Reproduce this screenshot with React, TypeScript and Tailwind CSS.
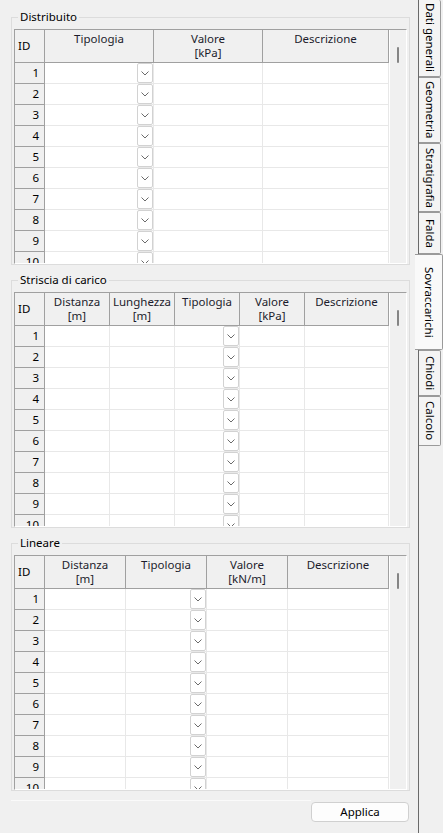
import React from 'react';

type Col = { lines: string[]; dropdown?: boolean };

const ROWS = [1, 2, 3, 4, 5, 6, 7, 8, 9, 10];

const Chevron = () => (
  <svg width="8" height="5" viewBox="0 0 8 5" fill="none">
    <path d="M0.5 0.5 L4 4 L7.5 0.5" stroke="#6b6b6b" strokeWidth="1" />
  </svg>
);

const DataTable = ({ cols, gridClass }: { cols: Col[]; gridClass: string }) => {
  return (
    <div className="flex border-t border-l border-[#a0a0a0] border-r-white border-b-white border-r border-b">
      <div className="flex flex-col">
        {/* Header */}
        <div className={`grid ${gridClass} h-[33px]`}>
          <div className="flex items-center pl-[3px] border-r border-b border-[#a0a0a0]">ID</div>
          {cols.map((c, i) => (
            <div
              key={i}
              className="flex flex-col items-center pt-[2px] leading-[14px] border-r border-b border-[#a0a0a0] text-[#1c1c2c]"
            >
              {c.lines.map((l) => (
                <span key={l}>{l}</span>
              ))}
            </div>
          ))}
        </div>
        {/* Body */}
        <div className="h-[200px] overflow-hidden">
          {ROWS.map((r) => (
            <div key={r} className={`grid ${gridClass} h-[21px]`}>
              <div className="flex items-center justify-end pr-[5px] bg-[#f0f0f0] border-r border-b border-[#a0a0a0]">
                {r}
              </div>
              {cols.map((c, i) => (
                <div key={i} className="flex justify-end bg-white border-r border-b border-[#e8e8e8]">
                  {c.dropdown && (
                    <div className="w-[16px] h-full flex items-center justify-center bg-white border border-[#d2d2d2] rounded-[2px]">
                      <Chevron />
                    </div>
                  )}
                </div>
              ))}
            </div>
          ))}
        </div>
      </div>
      {/* Scrollbar */}
      <div className="w-[17px] border-l border-white bg-[#f0f0f0] flex flex-col pt-[17px] pl-[7px]">
        <div className="w-[2px] h-[16px] rounded-full bg-[#858585]" />
      </div>
    </div>
  );
};

const Group = ({ title, children, className = '' }: { title: string; children: React.ReactNode; className?: string }) => (
  <fieldset className={`w-[399px] border border-[#dcdcdc] px-[2px] pt-[4px] pb-0 ${className}`}>
    <legend className="ml-[4px] px-[2px] leading-[16px]">{title}</legend>
    {children}
  </fieldset>
);

const tabs = [
  { label: 'Dati generali', h: 'h-[77px]', first: true },
  { label: 'Geometria', h: 'h-[66px]' },
  { label: 'Stratigrafia', h: 'h-[69px]' },
  { label: 'Falda', h: 'h-[42px]' },
  { label: 'Sovraccarichi', h: 'h-[96px]', selected: true },
  { label: 'Chiodi', h: 'h-[46px]' },
  { label: 'Calcolo', h: 'h-[50px]' },
];

export default function App() {
  return (
    <div
      className="w-[443px] h-[833px] bg-[#f0f0f0] flex text-[11.5px] leading-[16px] text-black overflow-hidden"
      style={{ fontFamily: '"Segoe UI", "Noto Sans", sans-serif' }}
    >
      {/* Content */}
      <div className="w-[415px] flex flex-col pl-[11px] pt-[9px]">
        <Group title="Distribuito">
          <DataTable
            gridClass="grid-cols-[30px_109px_109px_126px]"
            cols={[
              { lines: ['Tipologia'], dropdown: true },
              { lines: ['Valore', '[kPa]'] },
              { lines: ['Descrizione'] },
            ]}
          />
        </Group>
        <Group title="Striscia di carico" className="mt-[7px]">
          <DataTable
            gridClass="grid-cols-[30px_65px_65px_65px_65px_84px]"
            cols={[
              { lines: ['Distanza', '[m]'] },
              { lines: ['Lunghezza', '[m]'] },
              { lines: ['Tipologia'], dropdown: true },
              { lines: ['Valore', '[kPa]'] },
              { lines: ['Descrizione'] },
            ]}
          />
        </Group>
        <Group title="Lineare" className="mt-[7px]">
          <DataTable
            gridClass="grid-cols-[30px_81px_81px_81px_101px]"
            cols={[
              { lines: ['Distanza', '[m]'] },
              { lines: ['Tipologia'], dropdown: true },
              { lines: ['Valore', '[kN/m]'] },
              { lines: ['Descrizione'] },
            ]}
          />
        </Group>
        {/* Bottom bar */}
        <div className="w-[398px] flex items-start mt-[9px]">
          <div className="flex-1 h-px bg-[#fafafa]" />
          <button className="w-[98px] h-[20px] mt-[2px] bg-[#fdfdfd] border border-[#d0d0d0] rounded-[4px] flex items-center justify-center leading-[16px]">
            Applica
          </button>
        </div>
      </div>

      {/* Vertical tabs */}
      <div className="w-[28px] flex flex-col">
        {tabs.map((t) =>
          t.selected ? (
            <div
              key={t.label}
              className={`${t.h} w-[28px] bg-[#f9f9f9] border-y border-r border-[#9a9a9a] rounded-r-[2px] flex items-center justify-center`}
            >
              <span className="[writing-mode:vertical-rl]">{t.label}</span>
            </div>
          ) : (
            <div key={t.label} className={`${t.h} ml-[3px] w-[23px] border-l border-[#6a6a6a] flex`}>
              <div
                className={`flex-1 bg-[#f4f4f4] border-r border-b border-[#9a9a9a] rounded-r-[2px] flex items-center justify-center ${
                  t.first ? '' : 'border-t'
                }`}
              >
                <span className="[writing-mode:vertical-rl]">{t.label}</span>
              </div>
            </div>
          )
        )}
        <div className="flex-1 ml-[3px] border-l border-[#6a6a6a]" />
      </div>
    </div>
  );
}
